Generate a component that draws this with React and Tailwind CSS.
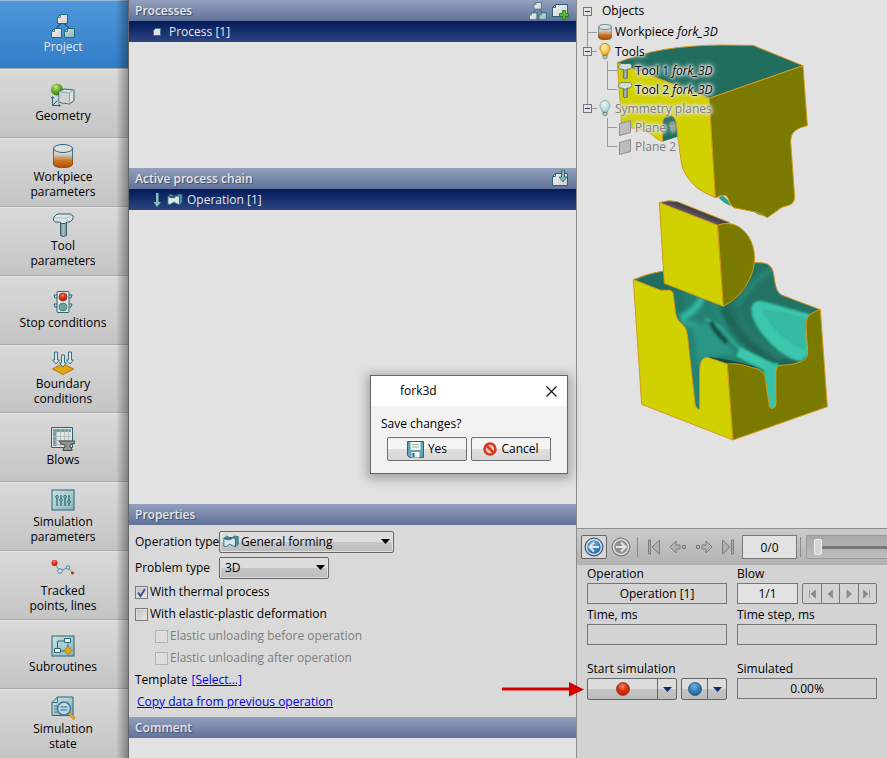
import { useState } from "react";
import clsx from "clsx";

const INK = "#2a6478";

const NAV_ITEMS = [
  { id: "project", label: "Project", icon: ProjectIcon },
  { id: "geometry", label: "Geometry", icon: GeometryIcon },
  { id: "workpiece", label: "Workpiece parameters", icon: WorkpieceIcon },
  { id: "tool", label: "Tool parameters", icon: ToolIcon },
  { id: "stop", label: "Stop conditions", icon: StopIcon },
  { id: "boundary", label: "Boundary conditions", icon: BoundaryIcon },
  { id: "blows", label: "Blows", icon: BlowsIcon },
  { id: "simulation", label: "Simulation parameters", icon: SlidersIcon },
  { id: "tracked", label: "Tracked points, lines", icon: TrackedIcon },
  { id: "subroutines", label: "Subroutines", icon: SubroutinesIcon },
  { id: "state", label: "Simulation state", icon: StateIcon },
];

/* ---------- icons ---------- */

function Gradients() {
  return (
    <svg className="absolute size-0" aria-hidden="true">
      <defs>
        <linearGradient id="hot" x1="0" y1="0" x2="0" y2="1">
          <stop offset="0.3" stopColor="#d4d4d2" />
          <stop offset="0.65" stopColor="#cc7420" />
          <stop offset="1" stopColor="#b84e00" />
        </linearGradient>
        <linearGradient id="paper" x1="0" y1="0" x2="1" y2="1">
          <stop offset="0" stopColor="#f2f2f2" />
          <stop offset="1" stopColor="#cfcfcf" />
        </linearGradient>
        <linearGradient id="aqua" x1="0" y1="0" x2="1" y2="1">
          <stop offset="0" stopColor="#cde2e2" />
          <stop offset="1" stopColor="#83b5b6" />
        </linearGradient>
        <linearGradient id="steel" x1="0" y1="0" x2="1" y2="0">
          <stop offset="0" stopColor="#7e8588" />
          <stop offset="0.5" stopColor="#b4b8ba" />
          <stop offset="1" stopColor="#7e8588" />
        </linearGradient>
        <radialGradient id="green" cx="0.4" cy="0.3" r="0.7">
          <stop offset="0" stopColor="#c4e690" />
          <stop offset="0.5" stopColor="#6fae2c" />
          <stop offset="1" stopColor="#3d7a10" />
        </radialGradient>
        <radialGradient id="red" cx="0.45" cy="0.3" r="0.7">
          <stop offset="0" stopColor="#f08a70" />
          <stop offset="0.5" stopColor="#d92e0c" />
          <stop offset="1" stopColor="#c02400" />
        </radialGradient>
        <radialGradient id="blue" cx="0.45" cy="0.3" r="0.75">
          <stop offset="0" stopColor="#79b2e0" />
          <stop offset="0.5" stopColor="#357fbd" />
          <stop offset="1" stopColor="#1c5a94" />
        </radialGradient>
        <radialGradient id="bulb" cx="0.4" cy="0.3" r="0.7">
          <stop offset="0" stopColor="#fff3c0" />
          <stop offset="1" stopColor="#e8ae14" />
        </radialGradient>
        <radialGradient id="bulbOff" cx="0.4" cy="0.3" r="0.7">
          <stop offset="0" stopColor="#eef6f7" />
          <stop offset="1" stopColor="#a9cfd6" />
        </radialGradient>
      </defs>
    </svg>
  );
}

function Icon({ className = "size-6", viewBox = "0 0 24 24", children }) {
  return (
    <svg className={clsx("shrink-0", className)} viewBox={viewBox} fill="none" aria-hidden="true">
      {children}
    </svg>
  );
}

function ProjectIcon({ className }) {
  return (
    <Icon className={className}>
      <path d="M10 9.5 5.5 14M13 9.5l5 4.5" stroke="#1f5a88" strokeWidth="1.2" />
      <path d="M9.5.5h7v9h-10v-6z" fill="url(#paper)" stroke={INK} />
      <path d="M3.5 14.5h7v9h-10v-6z" fill="url(#paper)" stroke={INK} />
      <path d="M16.5 14.5h7v9h-10v-6z" fill="url(#aqua)" stroke={INK} />
      <path d="M9.5.5v3h-3M3.5 14.5v3h-3M16.5 14.5v3h-3" stroke={INK} strokeWidth="0.8" />
    </Icon>
  );
}

function GeometryIcon() {
  return (
    <Icon>
      <circle cx="6" cy="6.5" r="6" fill="url(#green)" />
      <path d="M8 8.500 13 6l10 1v10.500L18.500 21 8 19.500z" fill="#dfe1e1" stroke={INK} strokeLinejoin="round" />
      <path d="M8.500 9 18 10v10.500L8.500 19z" fill="#d0d2d2" />
      <path d="M8 8.500 18.500 10V21M18.500 10 23 7" stroke="#7ba4b0" strokeWidth="0.9" />
      <path d="M1.500 14v8.500H9M2 22l4.500-4.500M0 15.500 1.500 13.500 3 15.500M7.500 21l2 1.500-2 1.500" stroke={INK} />
    </Icon>
  );
}

function WorkpieceIcon({ className }) {
  return (
    <Icon className={className}>
      <path d="M2.500 4v16c0 2 4 3.500 9.500 3.500s9.500-1.500 9.500-3.500V4z" fill="url(#hot)" stroke="#3f6f7c" />
      <path d="M2.500 16v4c0 2 4 3.500 9.500 3.500s9.500-1.500 9.500-3.500v-4" stroke="#a04a0a" />
      <ellipse cx="12" cy="4.500" rx="9.500" ry="4" fill="#dedede" stroke={INK} />
    </Icon>
  );
}

function ToolIcon({ className }) {
  return (
    <Icon className={className}>
      <path d="M9.500 9h6v13.500q-3 2-6 0z" fill="url(#steel)" stroke={INK} />
      <path d="M2.500 4.500 6 1h13.500l2.500 2v3l-3 3h-3.500l-1 1.500H10L9 9H4.500l-2-1.500z" fill="#dfe3e4" stroke={INK} strokeLinejoin="round" />
      <path d="M3 5h13l4-3M16 5v4" stroke="#a9c2c9" strokeWidth="0.9" />
    </Icon>
  );
}

function StopIcon() {
  return (
    <Icon>
      <path d="M6 5H3l1 3h2M18 5h3l-1 3h-2M6 14H3l1 3h2M18 14h3l-1 3h-2" fill="#cfe0e3" stroke={INK} />
      <rect x="6" y="1.500" width="12" height="21" rx="1" fill="#dce4e5" stroke={INK} />
      <circle cx="12" cy="7" r="4" fill="url(#red)" stroke="#7e3a30" strokeWidth="0.8" />
      <circle cx="12" cy="17" r="4" fill="#6da592" stroke="#41796b" strokeWidth="0.8" />
    </Icon>
  );
}

function BoundaryIcon() {
  return (
    <Icon>
      <path d="M1.500 18 12 12.500 22.500 18 12 23.500z" fill="#e2a712" stroke="#a8760a" />
      <g fill="#d8e6e9" stroke={INK} strokeWidth="0.9" strokeLinejoin="round">
        <path d="M3.500 1h3v8h2L5 13 1.500 9h2z" />
        <path d="M17.500 1h3v8h2L19 13l-3.500-4h2z" />
        <path d="M10.500 4h3v8h2L12 16l-3.500-4h2z" />
      </g>
    </Icon>
  );
}

function BlowsIcon() {
  return (
    <Icon>
      <path d="M.5.5h21v20H.5z" fill="#e2e4e4" stroke={INK} />
      <path d="M2 2h18v3H2zM2 5h3v14H2z" fill="#6da5a8" />
      <path d="M5.500 5v14M9.500 2v17M13.500 2v17M17.500 2v17M2 9.500h18M2 13.500h18M2 17.500h18" stroke="#a7b2b4" strokeWidth="0.8" />
      <path d="M8 14h16v2l-5 2v2l2 2v1.500H12V22l2-2v-2l-4-1z" fill="#929292" stroke="#4a4a4a" />
    </Icon>
  );
}

function SlidersIcon() {
  return (
    <Icon>
      <rect x="1" y="1" width="22" height="20" fill="url(#aqua)" stroke={INK} />
      <path d="M6 6v11M10 6v11M14 6v11M18 6v11" stroke={INK} strokeWidth="1.200" />
      <g fill="#e8f1f2" stroke={INK}>
        <circle cx="6" cy="8" r="1.300" />
        <circle cx="10" cy="11" r="1.300" />
        <circle cx="14" cy="8" r="1.300" />
        <circle cx="18" cy="13" r="1.300" />
      </g>
    </Icon>
  );
}

function TrackedIcon() {
  return (
    <Icon>
      <path d="M3 5 9 13l8-3.500 4.500 5.500" stroke="#5b95a6" />
      <circle cx="3.500" cy="5" r="3" fill="url(#red)" />
      <circle cx="9" cy="13" r="2.300" fill="#cfe3e8" stroke="#4c8799" />
      <circle cx="17" cy="9.500" r="1.800" fill="#cfe3e8" stroke="#4c8799" />
      <circle cx="21.500" cy="15" r="1.500" fill="#cc2a10" />
    </Icon>
  );
}

function SubroutinesIcon() {
  return (
    <Icon>
      <rect x="1" y="2" width="22" height="20" fill="url(#aqua)" stroke={INK} />
      <path d="M14 7H6.500v7M17 10v3M9.500 17H14" stroke={INK} />
      <path d="M13.500 4.500h6v4h-6zM3.500 14.500h6v4h-6z" fill="#e5f0f1" stroke={INK} />
      <path d="M17 12.500 21 16.500 17 20.500 13 16.500z" fill="#e2a712" stroke="#a8760a" strokeWidth="0.8" />
    </Icon>
  );
}

function StateIcon() {
  return (
    <Icon>
      <path d="M6.500 1H22v18.500H1V6.500z" fill="url(#aqua)" stroke={INK} />
      <path d="M6.500 1v5.500H1M3 10h4M3 13h3M3 16h4" stroke={INK} strokeWidth="0.9" />
      <path d="m18 17 5.500 6" stroke="#b98112" strokeWidth="3" />
      <path d="m18 17 5 5.500" stroke="#e8b02a" strokeWidth="1.500" />
      <circle cx="13" cy="12.500" r="6.500" fill="#bcdbe6" stroke="#4b76a0" strokeWidth="1.600" />
      <path d="M9.500 11h7M9.500 14h7" stroke={INK} strokeWidth="1.200" />
    </Icon>
  );
}

function NewProcessIcon() {
  return (
    <Icon className="size-[18px]" viewBox="0 0 18 18">
      <path d="M4.500 2.500h12v12H1.500v-9z" fill="url(#paper)" stroke={INK} />
      <path d="M4.500 2.500v3h-3" stroke={INK} />
      <path d="M11.500 8.500h3v3h3v3h-3v3h-3v-3h-3v-3h3z" fill="#55b83f" stroke="#237a25" strokeWidth="0.9" />
    </Icon>
  );
}

function NewOperationIcon() {
  return (
    <Icon className="size-[18px]" viewBox="0 0 18 18">
      <path d="M4.500 3.500h12v12H1.500v-9z" fill="url(#paper)" stroke={INK} />
      <path d="M4.500 3.500v3h-3" stroke={INK} />
      <path d="M10.500 0h3v7h2.500l-4 5-4-5h2.500z" fill="#7db9b9" stroke={INK} strokeWidth="0.9" />
    </Icon>
  );
}

function FormingIcon({ className }) {
  return (
    <Icon className={className} viewBox="0 0 18 14">
      <path d="M1 3.500 4 1l3 1.500h3.500L13 1l4 .5V10l-3 3V4z" fill="#4f9a9e" stroke={INK} strokeLinejoin="round" />
      <path d="M1 3.500 4.500 5h3.500L11 3l3 .5V13l-3.500-1.500L7.500 10 4 12.500H1z" fill="#dbe7e8" stroke={INK} strokeLinejoin="round" />
    </Icon>
  );
}

function BulbIcon({ off }) {
  return (
    <Icon className="h-[17px] w-3" viewBox="0 0 12 17">
      <path
        d="M6 .5a5 5 0 0 0-5 5C1 8 3.500 9.500 3.500 12h5C8.500 9.500 11 8 11 5.500a5 5 0 0 0-5-5z"
        fill={off ? "url(#bulbOff)" : "url(#bulb)"}
        stroke={off ? "#83aab3" : "#c08a12"}
      />
      <path d="M4 12.500h4v2L6.500 16h-1L4 14.500z" fill="#b9c4c7" stroke="#5d757c" strokeWidth="0.8" />
    </Icon>
  );
}

function PlaneIcon() {
  return (
    <Icon className="h-4 w-3" viewBox="0 0 12 16">
      <path d="M.5 3.500 11.500.5v12l-11 3z" fill="#bdbdbd" stroke="#8e8e8e" />
    </Icon>
  );
}

/* ---------- left navigation ---------- */

function Sidebar({ active, onSelect }) {
  return (
    <nav className="relative flex flex-col border-r border-[#666]">
      {NAV_ITEMS.map(({ id, label, icon: NavIcon }) => (
        <button
          key={id}
          type="button"
          onClick={() => onSelect(id)}
          className={clsx(
            "flex flex-1 basis-0 flex-col items-center justify-center gap-px border-t pr-0.5 pb-0.5 leading-[15px]",
            id === active
              ? "border-[#9db9d4] bg-linear-to-b from-[#4f97da] to-[#2f7dc8] text-[#e6e6e6]"
              : "border-[#e4e4e4] bg-linear-to-b from-[#d9d9d9] to-[#c4c4c4] shadow-[0_-1px_0_#a9a9a9]"
          )}
        >
          <NavIcon />
          <span className={id === "stop" ? "" : "max-w-20"}>{label}</span>
        </button>
      ))}
      <div className="pointer-events-none absolute inset-y-0 right-0 w-3 bg-linear-to-r from-transparent to-black/35" />
    </nav>
  );
}

/* ---------- middle column ---------- */

function SectionHeader({ title, children }) {
  return (
    <header className="flex h-[21px] shrink-0 items-center justify-between bg-linear-to-b from-[#93a0bd] to-[#62739a] pr-[7px] pl-1.5">
      <h2 className="font-semibold text-[#e6e6e6] [text-shadow:1px_1px_1px_#3c4a6e]">{title}</h2>
      <div className="flex gap-1">{children}</div>
    </header>
  );
}

function SelectedRow({ children }) {
  return (
    <div className="flex h-[21px] shrink-0 items-center bg-linear-to-b from-[#06195a] to-[#2c4580] text-[#e6e6e6]">
      {children}
    </div>
  );
}

function Dropdown({ id, value, options, onChange, icon, className }) {
  return (
    <div className={clsx("relative h-[22px]", className)}>
      <select
        id={id}
        value={value}
        onChange={(event) => onChange(event.target.value)}
        className={clsx(
          "h-full w-full appearance-none rounded-xs border border-[#666] bg-linear-to-b from-[#dcdcdc] from-50% via-[#c6c6c6] via-50% to-[#bdbdbd] pr-5 shadow-[inset_0_0_0_1px_#e0e0e0]",
          icon ? "pl-[21px]" : "pl-[5px]"
        )}
      >
        {options.map((option) => (
          <option key={option}>{option}</option>
        ))}
      </select>
      {icon ? <span className="pointer-events-none absolute top-1 left-1">{icon}</span> : null}
      <svg className="pointer-events-none absolute top-2 right-1 h-[5px] w-[9px]" viewBox="0 0 9 5">
        <path d="M0 0h9L4.500 5z" />
      </svg>
    </div>
  );
}

function Checkbox({ label, checked, disabled, onChange }) {
  return (
    <label className={clsx("flex h-[22px] items-center gap-0.5", disabled && "pl-5 text-[#7d7d7d]")}>
      <span className="relative size-[13px]">
        <input
          type="checkbox"
          checked={checked}
          disabled={disabled}
          onChange={(event) => onChange(event.target.checked)}
          className="block size-[13px] appearance-none border border-[#7a7a7a] bg-linear-to-br from-[#c2c2c2] to-[#e6e6e6] shadow-[inset_0_0_0_1px_#dedede] disabled:border-[#b3b3b3] disabled:from-[#dcdcdc] disabled:to-[#dcdcdc]"
        />
        {checked ? (
          <svg className="pointer-events-none absolute top-0 left-0 size-[13px]" viewBox="0 0 13 13" fill="none">
            <path d="m3 6.500 2.500 3.500L10 3" stroke="#3c5191" strokeWidth="2" />
          </svg>
        ) : null}
      </span>
      {label}
    </label>
  );
}

function ProcessColumn() {
  const [operationType, setOperationType] = useState("General forming");
  const [problemType, setProblemType] = useState("3D");
  const [thermal, setThermal] = useState(true);
  const [elastic, setElastic] = useState(false);

  return (
    <main className="flex flex-col border-r border-[#8c8c8c] bg-[#e2e2e2]">
      <SectionHeader title="Processes">
        <ProjectIcon className="size-[18px]" />
        <NewProcessIcon />
      </SectionHeader>
      <SelectedRow>
        <Icon className="ml-6 size-2" viewBox="0 0 8 8">
          <path d="M2.500.5h5v7h-7v-5z" fill="#e2e2e2" stroke="#3c7c88" />
        </Icon>
        <span className="ml-2">Process [1]</span>
      </SelectedRow>
      <div className="flex-3" />

      <SectionHeader title="Active process chain">
        <NewOperationIcon />
      </SectionHeader>
      <SelectedRow>
        <Icon className="ml-6 h-3.5 w-2" viewBox="0 0 8 14">
          <path d="M3 0h2.500v9H8l-4 5-3.500-5H3z" fill="#86bdbd" />
        </Icon>
        <FormingIcon className="ml-1.5 h-[13px] w-4" />
        <span className="ml-1">Operation [1]</span>
      </SelectedRow>
      <div className="flex-7" />

      <SectionHeader title="Properties" />
      <div className="bg-[#d9d9d9] px-1.5 pt-1.5 pb-1">
        <div className="flex items-center">
          <label htmlFor="operation-type" className="w-21 whitespace-nowrap">Operation type</label>
          <Dropdown
            id="operation-type"
            className="w-[175px]"
            value={operationType}
            onChange={setOperationType}
            options={["General forming", "Ring rolling", "Cross wedge rolling"]}
            icon={<FormingIcon className="h-[13px] w-4" />}
          />
        </div>
        <div className="mt-1 mb-0.5 flex items-center">
          <label htmlFor="problem-type" className="w-21 whitespace-nowrap">Problem type</label>
          <Dropdown
            id="problem-type"
            className="w-[110px]"
            value={problemType}
            onChange={setProblemType}
            options={["3D", "2D"]}
          />
        </div>
        <Checkbox label="With thermal process" checked={thermal} onChange={setThermal} />
        <Checkbox label="With elastic-plastic deformation" checked={elastic} onChange={setElastic} />
        <Checkbox label="Elastic unloading before operation" checked={false} disabled />
        <Checkbox label="Elastic unloading after operation" checked={false} disabled />
        <div className="flex h-[22px] items-center gap-1">
          Template
          <a href="#template" className="text-[#0000e0] underline">[Select...]</a>
        </div>
        <div className="flex h-[22px] items-center pl-0.5">
          <a href="#copy" className="text-[#0000e0] underline">Copy data from previous operation</a>
        </div>
      </div>

      <SectionHeader title="Comment" />
      <textarea aria-label="Comment" className="block h-5 resize-none bg-[#e2e2e2] px-1.5 outline-none" />
    </main>
  );
}

/* ---------- 3D view ---------- */

function ForgingModel() {
  return (
    <svg
      className="absolute inset-0 h-full w-full"
      viewBox="0 0 310 528"
      preserveAspectRatio="xMinYMin meet"
      strokeLinejoin="round"
      role="img"
      aria-label="Upper die, workpiece and lower die"
    >
      <defs>
        <filter id="soft" x="-30%" y="-30%" width="160%" height="160%">
          <feGaussianBlur stdDeviation="6" />
        </filter>
        <filter id="softer" x="-30%" y="-30%" width="160%" height="160%">
          <feGaussianBlur stdDeviation="3" />
        </filter>
        <clipPath id="cavity">
          <path d="M100 269Q140 251 190 243L300 215 465 218Q492 217 502 222 518 232 521 252C526 290 530 308 547 316L661 359 640 500 600 530 540 540 530 645 515 656 500 650 485 565 382 530 310 510 305 659 290 657 280 640 230 435 200 310 182 301z" />
        </clipPath>
        <linearGradient id="bar" gradientUnits="userSpaceOnUse" x1="280" y1="50" x2="270" y2="76">
          <stop offset="0" stopColor="#36343c" />
          <stop offset="1" stopColor="#605c68" />
        </linearGradient>
      </defs>

      {/* upper die */}
      <g transform="scale(0.33333)" stroke="#d39a1c" strokeWidth="3">
        <path d="M256 425V375Q256 345 280 345 298 350 300 375L302 410z" fill="#216e5f" stroke="none" />
        <path d="M425 593 437 586 452 600 462 618Q440 610 425 593zM530 634 550 640 568 651 540 642z" fill="#2f9f8b" stroke="none" />
        <path d="M121 188Q240 137 430 135L528 136 678 197 397 295z" fill="#216e5f" />
        <path d="M121 188 397 295 415 593Q385 580 363 566 340 546 329 528 313 505 312 480L302 410 299 372Q294 345 276 346 257 350 256 374V425L240 416Q225 402 200 390L162 383 134 374z" fill="#d1d100" />
        <path d="M397 295 678 197 691 377C660 385 642 393 641 424L653 592Q652 612 632 617 615 618 598 634L571 653Q556 642 535 636L470 623C452 610 456 580 437 587 428 585 424 592 415 593z" fill="#7a7a00" />
      </g>

      {/* lower die */}
      <g transform="translate(23 190) scale(0.33333)">
        <g clipPath="url(#cavity)">
          <path d="M90 200h590v470H90z" fill="#248070" />
          <path d="M90 280 190 235 240 300 180 310z" fill="#216e5f" />
          <g transform="translate(165 195)">
            <g fill="none" filter="url(#soft)">
              <path d="M190 150 290 10 360 15 365 90 500 160 450 190 320 140 285 160 300 220 400 330 350 330z" fill="#237364" />
              <path d="M355 40Q290 75 245 150" stroke="#298776" strokeWidth="14" />
              <path d="M60 100Q90 130 65 175" stroke="#237565" strokeWidth="30" />
              <path d="M143 125Q125 168 78 190" stroke="#38c1a7" strokeWidth="18" />
              <path d="M78 192Q95 215 125 205" stroke="#2fa892" strokeWidth="14" />
              <path d="M110 215 155 200 245 300 150 305 130 330 105 250z" fill="#2b9785" />
              <path d="M102 230 128 460" stroke="#258374" strokeWidth="30" />
              <path d="M180 150Q190 200 240 260T345 330" stroke="#278977" strokeWidth="18" />
              <path d="M206 150Q220 215 285 272T390 330" stroke="#1e6557" strokeWidth="24" />
              <path d="M250 165Q270 225 330 275T420 325" stroke="#257c6c" strokeWidth="16" />
            </g>
            <g fill="none" filter="url(#softer)">
              <path d="M290 155Q296 132 330 140L465 178 458 300 435 322Q370 298 328 244 286 195 290 155z" fill="#3ac7ac" />
              <path d="M318 165Q380 165 455 190L450 285Q370 255 318 165z" fill="#35b9a0" />
              <path d="M345 322 390 310 450 320 400 335z" fill="#1e685a" />
              <path d="M150 192Q185 200 212 235T275 300" stroke="#2fa590" strokeWidth="9" />
              <path d="M168 200Q180 230 215 262" stroke="#174f45" strokeWidth="13" />
              <path d="M250 290Q300 318 345 335" stroke="#3ac8ad" strokeWidth="30" />
              <path d="M348 325 350 470" stroke="#38c3a9" strokeWidth="44" />
            </g>
            <path d="M155 306Q210 308 310 338L217 328z" fill="#154a40" />
          </g>
        </g>
        <g stroke="#d39a1c" strokeWidth="3">
          <path d="M100 269Q140 251 190 243M465 218Q492 217 502 222 518 232 521 252C526 290 530 308 547 316L661 359" fill="none" />
          <path d="M100 269 182 301H210Q219 302 220 318L225 355C228 380 230 390 246 401Q260 413 262 435L285 640Q288 658 299 659V545Q298 503 322 502L382 522 399 750 125 643z" fill="#d1d100" />
          <path d="M382 522Q420 518 455 533 490 538 495 560L508 648Q512 656 517 656 528 650 528 642V545Q527 528 542 526 580 525 600 516 624 510 623 485L618 405C618 375 635 368 661 359L682 650 399 750z" fill="#7a7a00" />
        </g>

        {/* workpiece */}
        <g stroke="#d39a1c" strokeWidth="3">
          <path d="M178 38Q205 28 232 35L390 98 353 106z" fill="url(#bar)" />
          <path d="M178 38 353 106 370 349 193 280z" fill="#d1d100" />
          <path d="M353 106C385 94 420 101 446 140 468 175 470 225 448 268Q425 320 370 349z" fill="#7a7a00" />
        </g>
      </g>
    </svg>
  );
}

const HALO =
  "[text-shadow:0_0_2px_#e2e2e2,0_0_3px_#e2e2e2,0_0_3px_#e2e2e2,0_0_4px_#e2e2e2,0_0_5px_#e2e2e2,0_0_6px_#e2e2e2]";

// line: how far the vertical runs; toggle: adds the expand box
function Branch({ height = 19, toggle, line, root }) {
  const mid = Math.floor(height / 2);
  const verticals = {
    first: `M10.500 ${mid}V${height}`,
    through: `M10.500 0v${height}`,
    last: `M10.500 0v${mid + 1}`,
  };
  return (
    <svg className="w-5 shrink-0" height={height} viewBox={`0 0 20 ${height}`} fill="none" shapeRendering="crispEdges">
      <path d={verticals[line]} stroke="#999" />
      {root ? null : <path d={`M10 ${mid + 0.5}h10`} stroke="#999" />}
      {toggle ? (
        <>
          <rect x="6.500" y={mid - 3.5} width="8" height="8" fill="#e2e2e2" stroke="#777" />
          <path d={`M8 ${mid + 0.5}h5`} stroke="#2c3f8c" />
        </>
      ) : null}
    </svg>
  );
}

function Trunk() {
  return (
    <svg className="h-[19px] w-5 shrink-0" viewBox="0 0 20 19" shapeRendering="crispEdges">
      <path d="M10.500 0v19" stroke="#999" />
    </svg>
  );
}

function ObjectTree() {
  return (
    <ul className={clsx("relative", HALO)}>
      <li className="flex h-[22px] items-center">
        <Branch height={22} toggle line="first" root />
        <span className="ml-[5px]">Objects</span>
      </li>
      <li className="flex h-5 items-center">
        <Branch height={20} line="through" />
        <WorkpieceIcon className="size-4" />
        <span className="ml-0.5">Workpiece <i>fork_3D</i></span>
      </li>
      <li>
        <div className="flex h-[19px] items-center">
          <Branch toggle line="through" />
          <span className="flex w-[18px] pl-0.5"><BulbIcon /></span>
          Tools
        </div>
        <ul>
          {["Tool 1", "Tool 2"].map((name, index) => (
            <li key={name} className="flex h-[19px] items-center">
              <Trunk />
              <Branch line={index === 1 ? "last" : "through"} />
              <span className="w-[18px]"><ToolIcon className="size-4" /></span>
              <span>{name} <i>fork_3D</i></span>
            </li>
          ))}
        </ul>
      </li>
      <li className="text-[#7d7d7d]">
        <div className="flex h-[19px] items-center">
          <Branch toggle line="last" />
          <span className="flex w-[18px] pl-0.5"><BulbIcon off /></span>
          Symmetry planes
        </div>
        <ul>
          {["Plane 1", "Plane 2"].map((name, index) => (
            <li key={name} className="flex h-[19px] items-center pl-5">
              <Branch line={index === 1 ? "last" : "through"} />
              <span className="flex w-[18px] pl-0.5"><PlaneIcon /></span>
              {name}
            </li>
          ))}
        </ul>
      </li>
    </ul>
  );
}

/* ---------- playback and simulation controls ---------- */

function RoundArrow({ blue, flip }) {
  return (
    <Icon className={clsx("size-5", flip && "rotate-180")} viewBox="0 0 20 20">
      <circle cx="10" cy="10" r="9" fill={blue ? "url(#blue)" : "#8f8f8f"} stroke={blue ? "#2a4f78" : "#777"} />
      <circle cx="10" cy="10" r="7.500" stroke="#dcdcdc" strokeWidth="1.500" />
      <path d="M15 10H6M10 5.500 5.500 10l4.500 4.500" stroke="#e4e4e4" strokeWidth="2.200" />
    </Icon>
  );
}

function SkipIcon({ flip }) {
  return (
    <Icon className={clsx("h-4 w-3.5", flip && "rotate-180")} viewBox="0 0 14 16">
      <path d="M1.500 1v14h2V1zM12.500 1v14L5 8z" fill="#b0b0b0" stroke="#7c7c7c" />
    </Icon>
  );
}

function StepIcon({ flip }) {
  return (
    <Icon className={clsx("h-4 w-[18px]", flip && "rotate-180")} viewBox="0 0 18 16">
      <path d="M1 8 7 2v4h4v4H7v4zM13.500 6.500h3v3h-3z" fill="#b4b4b4" stroke="#7c7c7c" />
    </Icon>
  );
}

function Toolbar() {
  return (
    <div className="flex h-[37px] shrink-0 items-center border-t border-[#8f8f8f] bg-linear-to-b from-[#cbcbcb] to-[#b2b2b2] pl-1">
      <button type="button" aria-label="Back" className="flex h-6 w-[26px] shrink-0 items-center justify-center rounded-xs border border-[#666] bg-[#d8d8d8]">
        <RoundArrow blue />
      </button>
      <button type="button" aria-label="Forward" className="ml-1 flex"><RoundArrow flip /></button>
      <span className="ml-1.5 h-5 w-px shrink-0 bg-[#8c8c8c]" />
      <div className="ml-[9px] flex items-center gap-2">
        <button type="button" aria-label="First record"><SkipIcon /></button>
        <button type="button" aria-label="Previous record"><StepIcon /></button>
        <button type="button" aria-label="Next record"><StepIcon flip /></button>
        <button type="button" aria-label="Last record"><SkipIcon flip /></button>
      </div>
      <input aria-label="Record" defaultValue="0/0" className="ml-[7px] h-6 w-[55px] shrink-0 border border-[#777] bg-[#e2e2e2] text-center outline-none" />
      <span className="ml-[3px] h-5 w-px shrink-0 bg-[#8c8c8c]" />
      <div className="ml-[5px] flex h-6 min-w-0 flex-1 items-center rounded-l-xs border border-r-0 border-[#999] bg-linear-to-b from-[#a9a9a9] to-[#bdbdbd] pl-[7px]">
        <input
          type="range"
          aria-label="Position"
          min="0"
          max="100"
          defaultValue="0"
          className="h-4 w-full min-w-0 appearance-none bg-[linear-gradient(#777,#777)] bg-size-[100%_3px] bg-center bg-no-repeat [&::-webkit-slider-thumb]:h-4 [&::-webkit-slider-thumb]:w-2 [&::-webkit-slider-thumb]:appearance-none [&::-webkit-slider-thumb]:rounded-xs [&::-webkit-slider-thumb]:border [&::-webkit-slider-thumb]:border-[#eee] [&::-webkit-slider-thumb]:bg-[#d6d6d6]"
        />
      </div>
    </div>
  );
}

function Field({ id, label, value }) {
  return (
    <div>
      <label htmlFor={id} className="block h-[18px] leading-[18px]">{label}</label>
      <input id={id} readOnly value={value} className="block h-[21px] w-full border border-[#777] text-center outline-none" />
    </div>
  );
}

const SPLIT_BUTTON =
  "flex h-[22px] divide-x divide-[#666] rounded-xs border border-[#666] bg-linear-to-b from-[#dcdcdc] from-50% via-[#c4c4c4] via-50% to-[#bcbcbc]";

function Caret() {
  return (
    <svg className="h-[5px] w-[9px]" viewBox="0 0 9 5">
      <path d="M0 0h9L4.500 5z" fill="#0c2a78" />
    </svg>
  );
}

function Dot({ color }) {
  return (
    <svg className="size-3.5" viewBox="0 0 14 14">
      <circle cx="7" cy="7" r="6.500" fill={color === "red" ? "url(#red)" : "url(#blue)"} stroke={color === "red" ? "#8f3a20" : "#2a5580"} strokeWidth="0.8" />
    </svg>
  );
}

function SimulationPanel() {
  const blowSteps = [
    { name: "First blow", path: "M2.500 1v8M8.500 1v8L4 5z" },
    { name: "Previous blow", path: "M7.500 1v8L3 5z" },
    { name: "Next blow", path: "M3 1v8L7.500 5z" },
    { name: "Last blow", path: "M7.500 1v8M1.500 1v8L6 5z" },
  ];

  return (
    <div className="grid h-[193px] shrink-0 grid-cols-2 content-start gap-x-2.5 bg-[#d3d3d3] px-2.5">
      <Field id="operation" label="Operation" value="Operation [1]" />
      <div>
        <label htmlFor="blow" className="block h-[18px] leading-[18px]">Blow</label>
        <div className="flex gap-1">
          <input id="blow" defaultValue="1/1" className="block h-[21px] min-w-0 flex-1 border border-[#777] bg-[#e2e2e2] text-center outline-none" />
          <div className="flex w-[75px] divide-x divide-[#777] rounded-xs border border-[#777]">
            {blowSteps.map((step) => (
              <button key={step.name} type="button" aria-label={step.name} className="flex flex-1 items-center justify-center">
                <Icon className="size-2.5" viewBox="0 0 10 10">
                  <path d={step.path} fill="#8a8a8a" stroke="#8a8a8a" strokeWidth="0.800" />
                </Icon>
              </button>
            ))}
          </div>
        </div>
      </div>

      <div className="mt-0.5"><Field id="time" label="Time, ms" value="" /></div>
      <div className="mt-0.5"><Field id="time-step" label="Time step, ms" value="" /></div>

      <div className="mt-[15px]">
        <span className="block h-[18px] leading-[18px]">Start simulation</span>
        <div className="relative flex gap-1">
          {/* pointer to the start button */}
          <svg className="pointer-events-none absolute top-0 right-full mr-[3px] h-[22px] w-[82px]" viewBox="0 0 82 22">
            <path d="M0 9.500h67V4l15 7.500L67 18.500v-6H0z" fill="#d60000" />
          </svg>
          <div className={clsx(SPLIT_BUTTON, "flex-1")}>
            <button type="button" aria-label="Start simulation" className="flex flex-1 items-center justify-center"><Dot color="red" /></button>
            <button type="button" aria-label="Start options" className="flex w-[18px] items-center justify-center"><Caret /></button>
          </div>
          <div className={clsx(SPLIT_BUTTON, "w-[46px]")}>
            <button type="button" aria-label="Record" className="flex flex-1 items-center justify-center"><Dot color="blue" /></button>
            <button type="button" aria-label="Record options" className="flex w-[18px] items-center justify-center"><Caret /></button>
          </div>
        </div>
      </div>
      <div className="mt-[15px]"><Field id="simulated" label="Simulated" value="0.00%" /></div>
    </div>
  );
}

/* ---------- dialog ---------- */

const DIALOG_BUTTON =
  "flex h-6 w-20 items-center justify-center gap-1 rounded-xs border border-[#707070] bg-linear-to-b from-[#f4f4f4] from-50% via-[#e0e0e0] via-50% to-[#d6d6d6]";

function SaveDialog({ onClose }) {
  return (
    <div
      role="dialog"
      aria-labelledby="dialog-title"
      className="absolute top-[375px] left-[370px] w-[198px] border border-[#666] bg-[#f2f2f2] shadow-[0_2px_10px_3px_rgba(0,0,0,0.28)]"
    >
      <div className="flex h-[30px] items-center justify-between bg-white pr-2.5 pl-[29px]">
        <h2 id="dialog-title">fork3d</h2>
        <button type="button" aria-label="Close" onClick={onClose}>
          <Icon className="size-[11px]" viewBox="0 0 11 11">
            <path d="m.5.5 10 10m0-10-10 10" stroke="#111" strokeWidth="1.200" />
          </Icon>
        </button>
      </div>
      <p className="px-2.5 pt-[9px] leading-[18px]">Save changes?</p>
      <div className="flex gap-1 px-4 pt-1 pb-3">
        <button type="button" onClick={onClose} className={DIALOG_BUTTON}>
          <Icon className="size-[17px]" viewBox="0 0 17 17">
            <path d="M.5.5h16v16h-14l-2-2z" fill="#5fa3b5" stroke={INK} />
            <path d="M3.500 1h10v8h-10z" fill="#f4f4f4" />
            <path d="M5 3.500h7M5 6h7" stroke="#aaa" />
            <path d="M4.500 11h8v5.500h-8z" fill="#f4f4f4" />
            <path d="M5.500 12h2v4h-2z" fill={INK} />
          </Icon>
          Yes
        </button>
        <button type="button" onClick={onClose} className={DIALOG_BUTTON}>
          <Icon className="size-3.5" viewBox="0 0 14 14">
            <circle cx="7" cy="7" r="5.500" fill="#f0c8c0" stroke="#d23a1e" strokeWidth="2.500" />
            <path d="m3 3 8 8" stroke="#d23a1e" strokeWidth="2.500" />
          </Icon>
          Cancel
        </button>
      </div>
    </div>
  );
}

function App() {
  const [section, setSection] = useState("project");
  const [dialogOpen, setDialogOpen] = useState(true);

  return (
    <div className="relative grid min-h-screen grid-cols-[129px_minmax(0,448fr)_minmax(0,310fr)] bg-[#e2e2e2] font-['Open_Sans','Noto_Sans',sans-serif] text-xs text-black">
      <Gradients />
      <Sidebar active={section} onSelect={setSection} />
      <ProcessColumn />
      <section className="flex min-w-0 flex-col">
        <div className="relative flex-1">
          <ForgingModel />
          <ObjectTree />
        </div>
        <Toolbar />
        <SimulationPanel />
      </section>
      {dialogOpen ? <SaveDialog onClose={() => setDialogOpen(false)} /> : null}
    </div>
  );
}

export default App;
